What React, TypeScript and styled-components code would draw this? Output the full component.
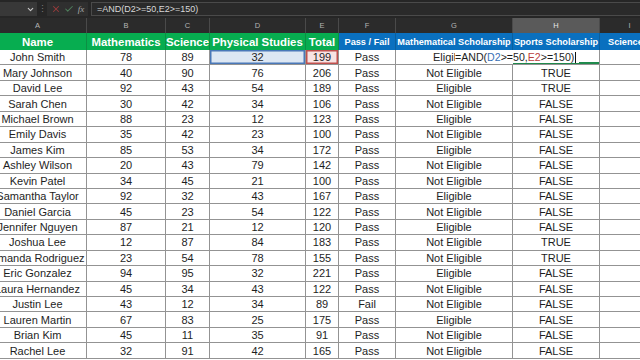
import styled, { createGlobalStyle } from "styled-components";
import { ChevronDown, X, Check } from "lucide-react";

const GlobalStyle = createGlobalStyle`
    html, body {
        margin: 0;
        padding: 0;
        background: #ffffff;
        overflow: hidden;
    }
    body {
        font-family: "Liberation Sans", Arial, sans-serif;
    }
`

const COLS = "98px 79px 44px 96px 33px 57px 117px 87px 60px";
const ROW_H = 15.45;

const Page = styled.div`
    width: 640px;
    height: 360px;
    overflow: hidden;
    display: flex;
    flex-direction: column;
`

const Toolbar = styled.div`
    height: 18px;
    background: #262626;
    display: flex;
    align-items: center;
    flex-shrink: 0;
`

const NameBox = styled.div`
    width: 37px;
    height: 14px;
    background: #383838;
    display: flex;
    align-items: center;
    justify-content: flex-end;
    padding-right: 2px;
    box-sizing: border-box;
    color: #c8c8c8;
`

const Dots = styled.div`
    width: 10px;
    text-align: center;
    color: #7a7a7a;
    font-size: 9px;
    line-height: 1;
`

const EditButtons = styled.div`
    width: 41px;
    height: 14px;
    background: #2f2f2f;
    display: flex;
    align-items: center;
    justify-content: space-around;
    padding: 0 2px;
    box-sizing: border-box;
`

const Fx = styled.span`
    font-family: "Liberation Serif", serif;
    font-style: italic;
    font-size: 9px;
    color: #a8a8a8;
`

const FormulaBox = styled.div`
    flex: 1;
    height: 14px;
    margin-left: 3px;
    border: 1px solid #4a4a4a;
    border-right: none;
    background: #2a2a2a;
    box-sizing: border-box;
    display: flex;
    align-items: center;
    padding-left: 5px;
    font-size: 9px;
    color: #d8d8d8;
`

const ColumnBar = styled.div`
    display: grid;
    grid-template-columns: ${COLS};
    height: 15px;
    margin-left: -11px;
    background: #2b2b2b;
    flex-shrink: 0;
`

const ColLetter = styled.div<{ $active?: boolean }>`
    display: flex;
    align-items: center;
    justify-content: center;
    font-size: 7.5px;
    color: ${(p) => (p.$active ? "#e6e6e6" : "#b5b5b5")};
    background: ${(p) => (p.$active ? "#5a5a5a" : "transparent")};
    border-right: 1px solid #4a4a4a;
    box-sizing: border-box;
`

const Sheet = styled.div`
    margin-left: -11px;
    display: flex;
    flex-direction: column;
`

const HeaderRow = styled.div`
    display: grid;
    grid-template-columns: ${COLS};
    height: 17px;
`

const HeadCell = styled.div<{ $blue?: boolean }>`
    background: ${(p) => (p.$blue ? "#0a70bf" : "#07ad50")};
    color: #ffffff;
    font-weight: bold;
    font-size: ${(p) => (p.$blue ? "9.2px" : "11.4px")};
    display: flex;
    align-items: center;
    justify-content: center;
    white-space: nowrap;
    overflow: hidden;
    border-right: 1px solid ${(p) => (p.$blue ? "#0b5f9e" : "#0c8f44")};
    box-sizing: border-box;
`

const Row = styled.div`
    display: grid;
    grid-template-columns: ${COLS};
    height: ${ROW_H}px;
`

type Mark = "blue" | "red" | "active" | "open" | undefined;

const Cell = styled.div<{ $mark?: Mark }>`
    position: relative;
    display: flex;
    align-items: center;
    justify-content: center;
    font-size: 11px;
    color: #1e1e1e;
    white-space: nowrap;
    box-sizing: border-box;
    border-right: 1px solid #939393;
    border-bottom: 1px solid #939393;
    background: ${(p) =>
        p.$mark === "blue" ? "#dde7f3" : p.$mark === "red" ? "#f8e3e3" : "#ffffff"};
    ${(p) => p.$mark === "blue" && "box-shadow: inset 0 0 0 1.5px #4a78b8;"}
    ${(p) => p.$mark === "red" && "box-shadow: inset 0 0 0 1.5px #c0504d;"}
    ${(p) => p.$mark === "active" && "box-shadow: inset 0 -2px 0 #1f8a4c;"}
    ${(p) => p.$mark === "open" && "border-right: none;"}
`

const EditBox = styled.div`
    position: absolute;
    left: 59px;
    top: 1px;
    bottom: 1px;
    width: 124px;
    background: #ffffff;
    z-index: 2;
    display: flex;
    align-items: center;
    font-size: 10.6px;
    color: #1e1e1e;
`

const Ref = styled.span<{ $c: string }>`
    color: ${(p) => p.$c};
`

const Caret = styled.span`
    display: inline-block;
    width: 1px;
    height: 11px;
    background: #111;
    margin-left: 1px;
`

// what is left visible of G2's "Eligible" beside the edit box
const ClipText = styled.span`
    position: absolute;
    left: 37px;
    width: 22px;
    overflow: hidden;
`

const letters = ["A", "B", "C", "D", "E", "F", "G", "H", "I"];
const heads = [
    "Name",
    "Mathematics",
    "Science",
    "Physical Studies",
    "Total",
    "Pass / Fail",
    "Mathematical Scholarship",
    "Sports Scholarship",
    "Science F",
];

const data: [string, number, number, number, number, string, string, string][] = [
    ["Mary Johnson", 40, 90, 76, 206, "Pass", "Not Eligible", "TRUE"],
    ["David Lee", 92, 43, 54, 189, "Pass", "Eligible", "TRUE"],
    ["Sarah Chen", 30, 42, 34, 106, "Pass", "Not Eligible", "FALSE"],
    ["Michael Brown", 88, 23, 12, 123, "Pass", "Eligible", "FALSE"],
    ["Emily Davis", 35, 42, 23, 100, "Pass", "Not Eligible", "FALSE"],
    ["James Kim", 85, 53, 34, 172, "Pass", "Eligible", "FALSE"],
    ["Ashley Wilson", 20, 43, 79, 142, "Pass", "Not Eligible", "FALSE"],
    ["Kevin Patel", 34, 45, 21, 100, "Pass", "Not Eligible", "FALSE"],
    ["Samantha Taylor", 92, 32, 43, 167, "Pass", "Eligible", "FALSE"],
    ["Daniel Garcia", 45, 23, 54, 122, "Pass", "Not Eligible", "FALSE"],
    ["Jennifer Nguyen", 87, 21, 12, 120, "Pass", "Eligible", "FALSE"],
    ["Joshua Lee", 12, 87, 84, 183, "Pass", "Not Eligible", "TRUE"],
    ["Amanda Rodriguez", 23, 54, 78, 155, "Pass", "Not Eligible", "TRUE"],
    ["Eric Gonzalez", 94, 95, 32, 221, "Pass", "Eligible", "FALSE"],
    ["Laura Hernandez", 45, 34, 43, 122, "Pass", "Not Eligible", "FALSE"],
    ["Justin Lee", 43, 12, 34, 89, "Fail", "Not Eligible", "FALSE"],
    ["Lauren Martin", 67, 83, 25, 175, "Pass", "Eligible", "FALSE"],
    ["Brian Kim", 45, 11, 35, 91, "Pass", "Not Eligible", "FALSE"],
    ["Rachel Lee", 32, 91, 42, 165, "Pass", "Not Eligible", "FALSE"],
];

export default function App() {
    return (
        <Page>
            <GlobalStyle />
            <Toolbar>
                <NameBox>
                    <ChevronDown size={9} strokeWidth={3} />
                </NameBox>
                <Dots>⋮</Dots>
                <EditButtons>
                    <X size={10} color="#9a3b3b" strokeWidth={2.5} />
                    <Check size={10} color="#4f7f5c" strokeWidth={2.5} />
                    <Fx>fx</Fx>
                </EditButtons>
                <FormulaBox>=AND(D2&gt;=50,E2&gt;=150)</FormulaBox>
            </Toolbar>

            <ColumnBar>
                {letters.map((l) => (
                    <ColLetter key={l} $active={l === "H"}>{l}</ColLetter>
                ))}
            </ColumnBar>

            <Sheet>
                <HeaderRow>
                    {heads.map((h, i) => (
                        <HeadCell key={h} $blue={i >= 5}>{h}</HeadCell>
                    ))}
                </HeaderRow>

                <Row>
                    <Cell>John Smith</Cell>
                    <Cell>78</Cell>
                    <Cell>89</Cell>
                    <Cell $mark="blue">32</Cell>
                    <Cell $mark="red">199</Cell>
                    <Cell>Pass</Cell>
                    <Cell $mark="open">
                        <ClipText>Eligible</ClipText>
                        <EditBox>
                            =AND(<Ref $c="#3a6fb5">D2</Ref>&gt;=50,<Ref $c="#b8403d">E2</Ref>&gt;=150)
                            <Caret />
                        </EditBox>
                    </Cell>
                    <Cell $mark="active" />
                    <Cell />
                </Row>

                {data.map((r) => (
                    <Row key={r[0]}>
                        {r.map((v, i) => (
                            <Cell key={i}>{v}</Cell>
                        ))}
                        <Cell />
                    </Row>
                ))}
            </Sheet>
        </Page>
    );
}
